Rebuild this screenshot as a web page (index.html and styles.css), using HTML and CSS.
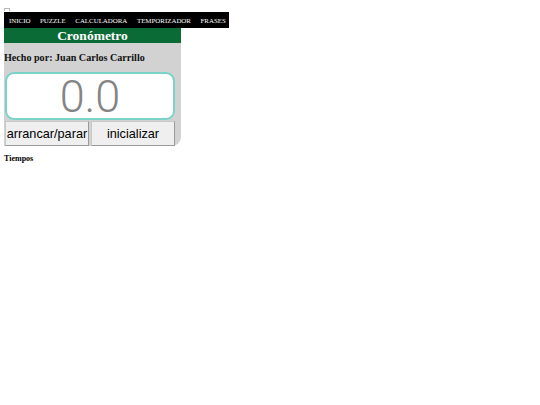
FILE: index.html
```html
<!DOCTYPE html>
<html lang="es">
<head>
<meta charset="utf-8">
<title>Cronómetro</title>
<link rel="stylesheet" href="styles.css">
</head>
<body>
<div class="placeholder"></div>
<nav class="menu">
  <a href="#">INICIO</a>
  <a href="#">PUZZLE</a>
  <a href="#">CALCULADORA</a>
  <a href="#">TEMPORIZADOR</a>
  <a href="#">FRASES</a>
</nav>
<div class="crono">
  <h1 class="titulo">Cronómetro</h1>
  <p class="autor">Hecho por: Juan Carlos Carrillo</p>
  <div class="pantalla">0.0</div>
  <div class="botones">
    <button class="boton">arrancar/parar</button>
    <button class="boton">inicializar</button>
  </div>
</div>
<h2 class="tiempos">Tiempos</h2>
</body>
</html>
```
FILE: styles.css
```css
html, body {
  margin: 0;
  padding: 0;
  background: #fff;
}
body {
  padding: 8px 4px;
  font-family: "Liberation Serif", "Times New Roman", serif;
}
.placeholder {
  width: 4px;
  height: 2px;
  border: 1px solid #b8b8b8;
  border-bottom: none;
  margin-bottom: 1px;
}
.menu {
  display: flex;
  width: 225px;
  height: 16px;
  align-items: center;
  background: #000;
  padding-left: 5px;
  box-sizing: border-box;
  gap: 9.6px;
  white-space: nowrap;
}
.menu a {
  color: #fff;
  text-decoration: none;
  font-size: 6.9px;
}
.crono {
  width: 177px;
  background: #d2d2d2;
  border-bottom-right-radius: 9px;
}
.titulo {
  margin: 0;
  height: 15px;
  line-height: 15px;
  background: #0b6b36;
  color: #fff;
  text-align: center;
  font-size: 13.5px;
  font-weight: bold;
}
.autor {
  margin: 0;
  padding: 9px 0 0 0;
  height: 20px;
  font-size: 10.1px;
  font-weight: bold;
  color: #111;
}
.pantalla {
  margin-left: 1px;
  width: 170px;
  height: 48px;
  box-sizing: border-box;
  background: #fff;
  border: 2px solid #7ad3c8;
  border-radius: 9px;
  font-family: Roboto, "Liberation Sans", Arial, sans-serif;
  font-weight: 300;
  font-size: 45px;
  line-height: 46px;
  color: #848484;
  text-align: center;
}
.botones {
  display: flex;
  gap: 2px;
  margin: 1px 0 0 1px;
}
.boton {
  width: 84px;
  height: 25px;
  padding: 0;
  margin: 0;
  box-sizing: border-box;
  background: #efefef;
  border: 1px solid #9a9a9a;
  border-top-color: #c8c8c8;
  border-left-color: #c8c8c8;
  font-family: "Liberation Sans", Arial, sans-serif;
  font-size: 12.7px;
  color: #000;
  white-space: nowrap;
}
.tiempos {
  margin: 8px 0 0 0;
  font-size: 8px;
  font-weight: bold;
}
```
